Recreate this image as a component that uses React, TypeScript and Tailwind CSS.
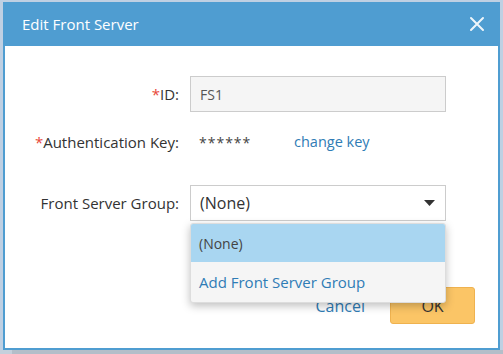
import React from "react";

export default function App() {
  return (
    <div
      className="relative w-[503px] h-[354px] overflow-hidden bg-[#bfd0e3]"
      style={{ fontFamily: '"Open Sans", "Noto Sans", sans-serif' }}
    >
      <div className="absolute left-0 right-0 top-[350px] h-[4px] flex">
        <div className="w-[12px] bg-[#c5d0dc]" />
        <div className="flex-1 bg-[#b4bec9]" />
      </div>
      <div className="ml-[3px] pt-[2px] w-[497px]">
        <div className="relative h-[348px] w-[497px] border-x-2 border-b-2 border-[#4f9dd1] bg-white">
          <div className="-mx-[2px] h-[44px] bg-[#4f9dd1] flex items-center justify-between pl-[19px] pr-[15px]">
            <span className="text-[15px] text-white">Edit Front Server</span>
            <svg width="16" height="16" viewBox="0 0 16 16" className="opacity-90">
              <path d="M2 2 L14 14 M14 2 L2 14" stroke="#ffffff" strokeWidth="2" strokeLinecap="round" />
            </svg>
          </div>
          <div className="flex flex-col pt-[30px] text-[15px] text-[#333333]">
            <div className="flex items-center h-[36px]">
              <div className="w-[174px] text-right">
                <span className="text-[#e8473a]">*</span>ID:
              </div>
              <div className="ml-[11px] w-[256px] h-[36px] border border-[#cccccc] bg-[#f5f5f5] flex items-center pl-[9px] text-[14px] text-[#555555]">
                FS1
              </div>
            </div>
            <div className="flex items-center h-[36px] mt-[12px]">
              <div className="w-[174px] text-right">
                <span className="text-[#e8473a]">*</span>Authentication Key:
              </div>
              <div className="ml-[20px] w-[95px] text-[14px] text-[#444444] tracking-[1px]">******</div>
              <div className="text-[14.5px] text-[#2f7cb5]">change key</div>
            </div>
            <div className="flex items-center h-[36px] mt-[25px]">
              <div className="w-[174px] text-right">Front Server Group:</div>
              <div className="ml-[11px] w-[256px] h-[36px] border border-[#cccccc] bg-white flex items-center justify-between pl-[9px] pr-[10px] text-[16px] text-[#333333]">
                <span>(None)</span>
                <svg width="11" height="6" viewBox="0 0 11 6">
                  <path d="M0 0 L11 0 L5.5 6 Z" fill="#333333" />
                </svg>
              </div>
            </div>
            <div className="flex items-center justify-end mt-[66px] pr-[23px]">
              <div className="text-[16px] text-[#2f7cb5] mr-[25px]">Cancel</div>
              <div className="w-[85px] h-[37px] rounded-[3px] border border-[#efb24f] bg-[#fbc566] flex items-center justify-center text-[16px] text-[#333333]">
                OK
              </div>
            </div>
          </div>
          <div className="absolute left-[185px] top-[221px] w-[256px] rounded-[3px] border border-[#dddddd] bg-[#f5f5f5] shadow-[0_3px_8px_rgba(0,0,0,0.25)] overflow-hidden">
            <div className="h-[38px] bg-[#a9d6f1] flex items-center pl-[8px] text-[14px] text-[#444444]">
              (None)
            </div>
            <div className="h-[40px] flex items-center pl-[8px] text-[15px] text-[#2f7cb5]">
              Add Front Server Group
            </div>
          </div>
        </div>
      </div>
    </div>
  );
}
